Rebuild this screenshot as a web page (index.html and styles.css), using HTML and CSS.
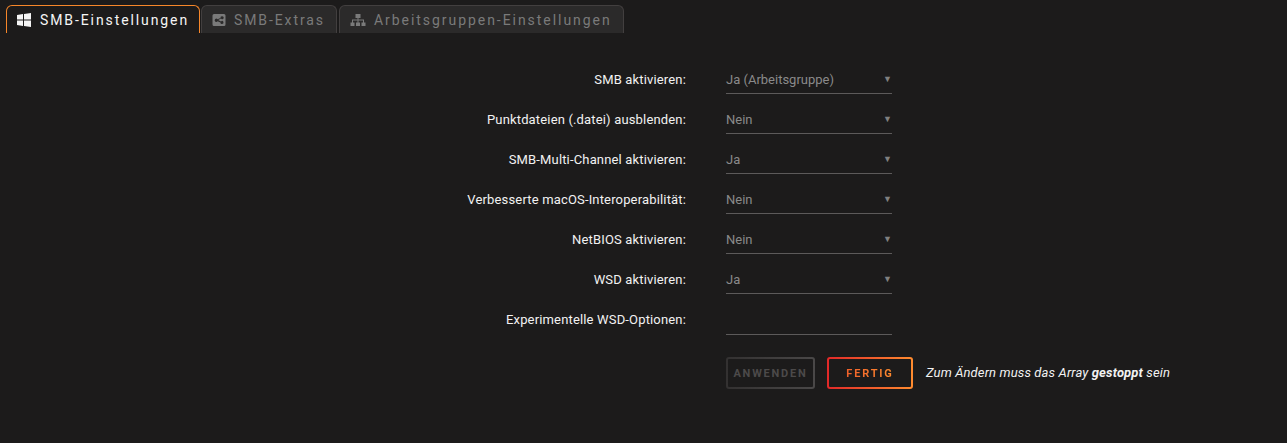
FILE: index.html
```html
<!DOCTYPE html>
<html lang="de">
<head>
<meta charset="utf-8">
<title>SMB-Einstellungen</title>
<link rel="stylesheet" href="styles.css">
</head>
<body>
<nav class="tabs">
  <div class="tab active">
    <svg class="icon" viewBox="0 0 14 14"><path fill="currentColor" d="M0 2l6-.9V6.600H0zM7 .95L14 0v6.600H7zM0 7.400h6v5.500l-6-.9zM7 7.400h7V14l-7-.95z"/></svg>
    <span>SMB-Einstellungen</span>
  </div>
  <div class="tab inactive">
    <svg class="icon" viewBox="0 0 14 14"><path fill="currentColor" fill-rule="evenodd" d="M2 1h10a1.500 1.500 0 0 1 1.500 1.500v9A1.500 1.500 0 0 1 12 13H2a1.500 1.500 0 0 1-1.500-1.500v-9A1.500 1.500 0 0 1 2 1zm8 2.200a1.500 1.500 0 0 0-1.500 1.800L5.600 6.300a1.600 1.600 0 1 0 0 1.900l2.900 1.200a1.500 1.500 0 1 0 .5-1l-2.800-1.300v-.2L9 5.600a1.500 1.500 0 1 0 1-2.400z"/></svg>
    <span>SMB-Extras</span>
  </div>
  <div class="tab inactive wide">
    <svg class="icon icon-wide" viewBox="0 0 16 14"><path fill="currentColor" d="M5.500 1h5v4h-2v1.500H14V9.500h1.500V13h-4V9.500H13V7.500H8.500v2H10V13H6V9.500h1.500v-2H3v2h1.500V13h-4V9.500H2V6.500h5.500V5h-2z"/></svg>
    <span>Arbeitsgruppen-Einstellungen</span>
  </div>
</nav>
<main class="form">
  <div class="row"><label class="label">SMB aktivieren:</label><div class="select"><span>Ja (Arbeitsgruppe)</span><i class="caret">▼</i></div></div>
  <div class="row"><label class="label">Punktdateien (.datei) ausblenden:</label><div class="select"><span>Nein</span><i class="caret">▼</i></div></div>
  <div class="row"><label class="label">SMB-Multi-Channel aktivieren:</label><div class="select"><span>Ja</span><i class="caret">▼</i></div></div>
  <div class="row"><label class="label">Verbesserte macOS-Interoperabilität:</label><div class="select"><span>Nein</span><i class="caret">▼</i></div></div>
  <div class="row"><label class="label">NetBIOS aktivieren:</label><div class="select"><span>Nein</span><i class="caret">▼</i></div></div>
  <div class="row"><label class="label">WSD aktivieren:</label><div class="select"><span>Ja</span><i class="caret">▼</i></div></div>
  <div class="row"><label class="label">Experimentelle WSD-Optionen:</label><div class="select text-input"></div></div>
  <div class="row actions">
    <button class="btn disabled">Anwenden</button>
    <button class="btn primary"><span>Fertig</span></button>
    <em class="note">Zum Ändern muss das Array <strong>gestoppt</strong> sein</em>
  </div>
</main>
</body>
</html>
```
FILE: styles.css
```css
* { box-sizing: border-box; }
html, body { margin: 0; height: 100%; }
body {
  background: #1c1b1b;
  color: #f2f2f2;
  font-family: Roboto, "Noto Sans", sans-serif;
  font-size: 13px;
  overflow: hidden;
}
.tabs {
  display: flex;
  gap: 1px;
  padding: 5px 0 0 6px;
}
.tab {
  display: flex;
  align-items: center;
  gap: 9px;
  height: 28px;
  padding: 0 10px;
  border: 1px solid #423f3f;
  border-bottom: 0;
  border-radius: 6px 6px 0 0;
  background: #2b2a2a;
  color: #7a7a7a;
  font-size: 14px;
  letter-spacing: 1.9px;
  white-space: nowrap;
}
.tab.inactive { gap: 8px; padding-right: 11px; }
.tab.wide { margin-left: 1px; padding-right: 11px; letter-spacing: 1.95px; }
.tab.active {
  background: #1c1b1b;
  border-color: #f7872a;
  color: #f5f5f5;
}
.icon { width: 14px; height: 14px; flex: none; }
.icon-wide { width: 16px; }
.form {
  margin-top: 26px;
}
.row {
  display: flex;
  align-items: center;
  height: 40px;
}
.label {
  width: 686px;
  margin-right: 40px;
  padding-top: 1px;
  text-align: right;
  font-weight: 400;
  letter-spacing: 0.16px;
}
.select {
  display: flex;
  align-items: center;
  justify-content: space-between;
  width: 166px;
  height: 30px;
  padding-top: 1px;
  border-bottom: 1px solid #5c5a5a;
  color: #8a8a8a;
}
.text-input { height: 31px; }
.caret {
  margin-right: 0;
  font-size: 9px;
  font-style: normal;
  color: #808080;
}
.actions {
  height: auto;
  margin-top: 18px;
  padding-left: 726px;
}
.btn {
  height: 32px;
  padding: 0;
  font-family: inherit;
  font-size: 11px;
  font-weight: 700;
  letter-spacing: 1.8px;
  text-transform: uppercase;
  border: 2px solid transparent;
  border-radius: 3px;
}
.disabled {
  width: 89px;
  margin-right: 12px;
  background: linear-gradient(#1c1b1b, #1c1b1b) padding-box, linear-gradient(90deg, #333131, #4a4848) border-box;
  color: #4c4a4a;
}
.primary {
  width: 86px;
  margin-right: 13px;
  background: linear-gradient(#1c1b1b, #1c1b1b) padding-box, linear-gradient(90deg, #e22828, #ff8c2f) border-box;
}
.primary span {
  background: linear-gradient(90deg, #f0602a, #ff8c2f);
  -webkit-background-clip: text;
  background-clip: text;
  color: transparent;
}
.note { margin-top: -2px; font-size: 13px; letter-spacing: 0.13px; color: #f2f2f2; }
```
